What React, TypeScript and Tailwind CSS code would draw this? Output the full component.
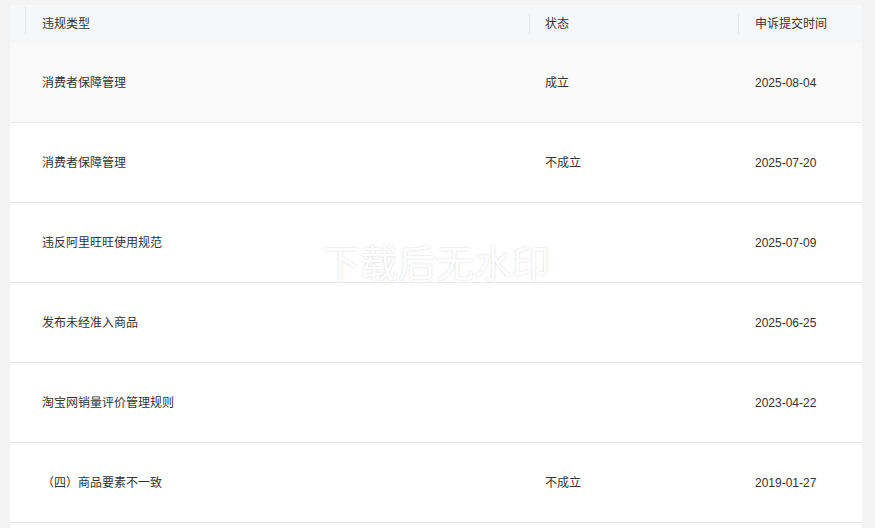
import React from 'react';

const rows = [
  { type: '消费者保障管理', status: '成立', date: '2025-08-04' },
  { type: '消费者保障管理', status: '不成立', date: '2025-07-20' },
  { type: '违反阿里旺旺使用规范', status: '', date: '2025-07-09' },
  { type: '发布未经准入商品', status: '', date: '2025-06-25' },
  { type: '淘宝网销量评价管理规则', status: '', date: '2023-04-22' },
  { type: '（四）商品要素不一致', status: '不成立', date: '2019-01-27' },
  { type: '', status: '', date: '' },
];

export default function App() {
  return (
    <div
      className="relative w-[875px] h-[528px] overflow-hidden bg-[#f3f3f3] pt-[5px] text-[12px] text-[#333]"
      style={{ fontFamily: '"Liberation Sans", "Noto Sans CJK SC", sans-serif' }}
    >
      <div className="ml-[10px] w-[852px]">
        {/* header */}
        <div className="grid grid-cols-[519px_209px_124px] h-[38px] items-center bg-[#f6f7f9]">
          <div className="relative h-full flex items-center pl-[32px]">
            <span className="absolute left-[15px] top-[1px] h-[28px] w-px bg-[#e6e6e6]" />
            违规类型
          </div>
          <div className="relative h-full flex items-center pl-[16px]">
            <span className="absolute left-0 top-[9px] h-[20px] w-px bg-[#e6e6e6]" />
            状态
          </div>
          <div className="relative h-full flex items-center pl-[17px]">
            <span className="absolute left-0 top-[9px] h-[20px] w-px bg-[#e6e6e6]" />
            申诉提交时间
          </div>
        </div>

        {/* body */}
        {rows.map((r, i) => (
          <div
            key={i}
            className={`grid grid-cols-[519px_209px_124px] h-[80px] items-center border-b border-[#ebebeb] ${
              i === 0 ? 'bg-[#fafafa]' : 'bg-white'
            }`}
          >
            <div className="pl-[32px]">{r.type}</div>
            <div className="pl-[16px]">{r.status}</div>
            <div className="pl-[17px]">{r.date}</div>
          </div>
        ))}
      </div>

      {/* watermark */}
      <div
        className="absolute left-[322px] top-[242px] text-[38px] leading-none text-white"
        style={{ fontFamily: '"Noto Sans CJK SC", sans-serif', textShadow: '0 0 2px rgba(0,0,0,0.2)' }}
      >
        下载后无水印
      </div>
    </div>
  );
}
